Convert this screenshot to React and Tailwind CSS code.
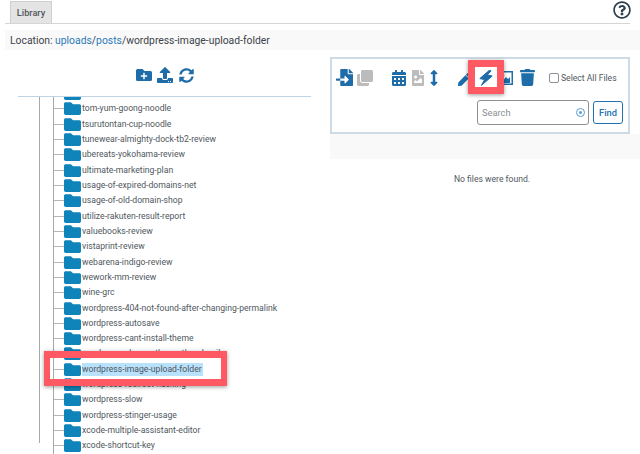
import React from "react";
import { FaFolder, FaFolderPlus, FaUpload, FaSyncAlt, FaFileImport, FaClone, FaCalendarAlt, FaFileImage, FaArrowsAltV, FaPen, FaTrash, FaRegQuestionCircle } from "react-icons/fa";

const folders = [
  "",
  "tom-yum-goong-noodle",
  "tsurutontan-cup-noodle",
  "tunewear-almighty-dock-tb2-review",
  "ubereats-yokohama-review",
  "ultimate-marketing-plan",
  "usage-of-expired-domains-net",
  "usage-of-old-domain-shop",
  "utilize-rakuten-result-report",
  "valuebooks-review",
  "vistaprint-review",
  "webarena-indigo-review",
  "wework-mm-review",
  "wine-grc",
  "wordpress-404-not-found-after-changing-permalink",
  "wordpress-autosave",
  "wordpress-cant-install-theme",
  "wordpress-change-theme-thumbnail",
  "wordpress-image-upload-folder",
  "wordpress-redirect-hacking",
  "wordpress-slow",
  "wordpress-stinger-usage",
  "xcode-multiple-assistant-editor",
  "xcode-shortcut-key",
];

function Row({ name }) {
  const active = name === "wordpress-image-upload-folder";
  return (
    <div className="flex items-center h-[15.32px] shrink-0">
      <div className="w-[10px] h-px bg-[#b5b5b5] shrink-0" />
      <FaFolder className="w-[17px] h-[17px] text-[#0f84ba] shrink-0" />
      <span className={"whitespace-nowrap leading-[13px] ml-px pr-px " + (active ? "bg-[#b8e1fb]" : "")}>{name}</span>
    </div>
  );
}

function Bolt() {
  return (
    <svg viewBox="0 0 14 16" className="w-[14px] h-[16px] ml-[8px]" fill="currentColor" stroke="currentColor" strokeWidth="1" strokeLinejoin="round">
      <polygon points="10,0.6 0.8,8.6 5.6,9.6 2.4,15.4 13.2,6 8.4,5 12,0.8" />
    </svg>
  );
}

function ImageFrame() {
  return (
    <svg viewBox="0 0 15 14" className="w-[15px] h-[14px] ml-[5px]">
      <rect x="0.75" y="0.75" width="13.5" height="12.5" fill="#ffffff" stroke="currentColor" strokeWidth="1.5" />
      <polygon points="3,12 8,6 10,8 12,6 12,12" fill="currentColor" />
      <circle cx="5" cy="4.5" r="1.2" fill="currentColor" />
    </svg>
  );
}

export default function App() {
  return (
    <div className="relative w-[640px] h-[454px] overflow-hidden bg-white text-[#3c434a] flex flex-col" style={{ fontFamily: '"Roboto", "Liberation Sans", sans-serif' }}>
      <div className="h-[24px] mx-[5px] mr-[10px] pl-[5px] flex justify-between items-end border-b border-[#d5d5d5] shrink-0">
        <div className="h-[22px] w-[42px] bg-[#e4e4e4] border border-b-0 border-[#cfcfcf] text-[9.2px] font-medium text-[#50575e] flex items-center justify-center">Library</div>
        <FaRegQuestionCircle className="w-[18px] h-[18px] text-[#2c3e50] mb-[4px] -mr-[1px]" />
      </div>

      <div className="mt-[6px] ml-[5px] h-[20px] bg-[#f9f9f9] pl-[5px] pt-px flex items-center text-[10.35px] text-[#3c434a] shrink-0">
        Location:&nbsp;<span className="text-[#2a7ab8]">uploads</span>/<span className="text-[#2a7ab8]">posts</span>/wordpress-image-upload-folder
      </div>

      <div className="flex flex-1 min-h-0">
        <div className="w-[330px] shrink-0 flex flex-col pl-[18px] pr-[19px] min-h-0">
          <div className="h-[46px] flex items-center justify-center gap-[5px] pt-[4px] text-[#1e6ca8] shrink-0">
            <FaFolderPlus className="w-[16px] h-[16px]" />
            <FaUpload className="w-[16px] h-[16px]" />
            <FaSyncAlt className="w-[15px] h-[15px] ml-px" />
          </div>
          <div className="flex-1 min-h-0 overflow-hidden border-t border-[#bfd3e2] pl-[21px]">
            <div className="border-l border-[#a8a8a8] pl-[13px] h-full">
              <div className="border-l border-[#a8a8a8] h-[400px] flex flex-col -mt-[11px] text-[8.65px] text-[#50575e]">
                {folders.map((f, i) => <Row key={i} name={f} />)}
              </div>
            </div>
          </div>
        </div>

        <div className="flex-1 min-w-0 pt-[7px] flex flex-col">
          <div className="w-[300px] h-[77px] border-2 border-[#cddbe7] relative flex flex-col shrink-0">
            <div className="flex items-center h-[36px] pt-[1px] text-[#1e6ca8]">
              <FaFileImport className="w-[17px] h-[17px] ml-[4px]" />
              <FaClone className="w-[16px] h-[16px] ml-[4px] text-[#bcbcbc]" />
              <FaCalendarAlt className="w-[14px] h-[16px] ml-[19px]" />
              <FaFileImage className="w-[12px] h-[16px] ml-[6px] text-[#bcbcbc]" />
              <FaArrowsAltV className="w-[10px] h-[16px] ml-[5px]" />
              <FaPen className="w-[13px] h-[13px] ml-[19px] mt-[3px]" />
              <Bolt />
              <ImageFrame />
              <FaTrash className="w-[15px] h-[17px] ml-[7px]" />
              <span className="w-[10px] h-[10px] ml-[14px] mt-px border border-[#8c8f94] rounded-[2px] bg-white" />
              <span className="ml-[2px] text-[8.6px] mt-px text-[#50575e] whitespace-nowrap">Select All Files</span>
            </div>
            <div className="flex justify-end items-center gap-[4px] pr-[5px] mt-[5px]">
              <div className="w-[112px] h-[25px] border border-[#8c8f94] rounded-[3px] flex items-center justify-between px-[2px] pl-[4px]">
                <span className="text-[9.3px] text-[#8a8f94]">Search</span>
                <span className="w-[9px] h-[9px] rounded-full border border-[#5b9bd1] flex items-center justify-center mr-[1px]">
                  <span className="w-[3px] h-[3px] rounded-full bg-[#5b9bd1]" />
                </span>
              </div>
              <div className="w-[30px] h-[23px] border border-[#2271b1] rounded-[3px] text-[9.3px] font-medium text-[#2271b1] flex items-center justify-center">Find</div>
            </div>
          </div>
          <div className="h-[25px] bg-[#f9f9f9] shrink-0" />
          <div className="w-[300px] ml-[12px] mt-[14px] text-center text-[8.6px] text-[#50575e] leading-[12px]">No files were found.</div>
        </div>
      </div>

      <div className="absolute left-[468px] top-[60px] w-[36px] h-[34px] border-[7px] border-[#ff5a64] shadow-[0_1px_4px_rgba(0,0,0,0.4)]" />
      <div className="absolute left-[44px] top-[351px] w-[183px] h-[35px] border-x-[6px] border-y-[7px] border-[#ff5a64] shadow-[0_1px_4px_rgba(0,0,0,0.4)]" />
    </div>
  );
}
